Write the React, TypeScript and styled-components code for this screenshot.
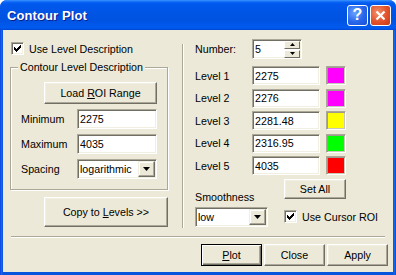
import React from 'react';
import styled, { createGlobalStyle } from 'styled-components';

const GlobalStyle = createGlobalStyle`
  html, body {
    margin: 0;
    padding: 0;
    background: #fff;
  }
  body {
    font-family: "Liberation Sans", Arial, sans-serif;
    font-size: 10.7px;
    color: #000;
  }
`;

const Window = styled.div`
  width: 396px;
  height: 275px;
  display: flex;
  flex-direction: column;
  background: linear-gradient(to right, #0831d9, #166aee 1px, #0855dd 3px, #0855dd calc(100% - 3px), #166aee calc(100% - 1px), #0831d9);
  border-radius: 7px 7px 0 0;
  overflow: hidden;
`;

const TitleBar = styled.div`
  flex: none;
  height: 30px;
  display: flex;
  align-items: center;
  padding: 0 5px 0 7px;
  box-sizing: border-box;
  background: linear-gradient(
    to bottom,
    #3d95ff 0,
    #0a66f5 2px,
    #0058ee 4px,
    #0055e5 12px,
    #0053e1 20px,
    #0058eb 25px,
    #005bf0 28px,
    #0046d0 30px
  );
`;

const Title = styled.div`
  flex: 1;
  color: #fff;
  font-weight: bold;
  font-size: 13px;
  letter-spacing: 0.1px;
  text-shadow: 1px 1px 0 #0a1e8c;
`;

const CaptionButtons = styled.div`
  display: flex;
  gap: 2px;
`;

const CaptionButton = styled.div<{ $kind: 'help' | 'close' }>`
  width: 21px;
  height: 21px;
  box-sizing: border-box;
  border: 1px solid #fff;
  border-radius: 3px;
  display: flex;
  align-items: center;
  justify-content: center;
  color: #fff;
  font-weight: bold;
  font-size: 16px;
  background: ${p =>
    p.$kind === 'close'
      ? 'radial-gradient(circle at 35% 35%, #f0916c, #e2512a 55%, #c8391a)'
      : 'radial-gradient(circle at 35% 35%, #6aa3ff, #2766ea 55%, #1a4fd6)'};
`;

const Client = styled.div`
  flex: 1;
  margin: 0 3px 3px;
  background: #ece9d8;
  display: flex;
  flex-direction: column;
`;

const TopArea = styled.div`
  display: flex;
  align-items: flex-start;
  padding: 9px 0 0 7px;
`;

const LeftColumn = styled.div`
  width: 158px;
  display: flex;
  flex-direction: column;
`;

const VSeparator = styled.div`
  width: 0;
  height: 184px;
  margin: 5px 0 0 14px;
  border-left: 1px solid #aca899;
  border-right: 1px solid #fff;
`;

const RightColumn = styled.div`
  margin-left: 11px;
  flex: 1;
  display: flex;
  flex-direction: column;
`;

const CheckRow = styled.label`
  display: flex;
  align-items: center;
  gap: 5px;
  height: 13px;
  margin: 3px 0 0 1px;
`;

const CheckBox = styled.span`
  width: 13px;
  height: 13px;
  box-sizing: border-box;
  flex: none;
  background: #fff;
  border: 1px solid;
  border-color: #aca899 #fff #fff #aca899;
  box-shadow: inset 1px 1px 0 #716f64, inset -1px -1px 0 #f1efe2;
  display: flex;
  align-items: center;
  justify-content: center;
`;

const GroupBox = styled.fieldset`
  margin: 6px 0 0;
  padding: 8px 10px 10px;
  min-width: 0;
  border: 1px solid #aca899;
  box-shadow: inset 1px 1px 0 #fff, 1px 1px 0 #fff;
  display: flex;
  flex-direction: column;
`;

const GroupLegend = styled.legend`
  padding: 0 2px;
  margin-left: -3px;
  line-height: 13px;
  background: #ece9d8;
`;

const Button = styled.button<{ $w: number; $h?: number; $default?: boolean }>`
  box-sizing: border-box;
  width: ${p => p.$w}px;
  height: ${p => p.$h ?? 22}px;
  flex: none;
  padding: 0;
  font: inherit;
  color: #000;
  background: #ece9d8;
  border: 1px solid;
  border-color: ${p => (p.$default ? '#000' : '#fff #716f64 #716f64 #fff')};
  box-shadow: ${p =>
    p.$default
      ? 'inset 1px 1px 0 #fff, inset -1px -1px 0 #716f64, inset -2px -2px 0 #aca899'
      : 'inset -1px -1px 0 #aca899, inset 1px 1px 0 #f1efe2'};
`;

const LoadButton = styled(Button)`
  margin-left: 23px;
`;

const CopyButton = styled(Button)`
  margin: 7px 0 0 34px;
`;

const FieldRow = styled.div`
  display: flex;
  align-items: center;
  margin-top: 5px;
`;

const FieldLabel = styled.span<{ $w: number }>`
  width: ${p => p.$w}px;
  flex: none;
`;

const Edit = styled.div<{ $w: number; $h?: number }>`
  box-sizing: border-box;
  width: ${p => p.$w}px;
  height: ${p => p.$h ?? 20}px;
  flex: none;
  display: flex;
  align-items: center;
  padding: 0 2px;
  background: #fff;
  border: 1px solid;
  border-color: #aca899 #fff #fff #aca899;
  box-shadow: inset 1px 1px 0 #716f64, inset -1px -1px 0 #f1efe2;
`;

const EditText = styled.span`
  flex: 1;
`;

const DropButton = styled.span`
  width: 17px;
  height: 16px;
  box-sizing: border-box;
  margin-right: -1px;
  flex: none;
  display: flex;
  align-items: center;
  justify-content: center;
  background: #ece9d8;
  border: 1px solid;
  border-color: #f1efe2 #716f64 #716f64 #f1efe2;
  box-shadow: inset -1px -1px 0 #aca899, inset 1px 1px 0 #fff;
`;

const SpinButtons = styled.span`
  display: flex;
  flex-direction: column;
  gap: 1px;
  margin-right: -1px;
`;

const SpinButton = styled.span`
  width: 16px;
  height: 8px;
  box-sizing: border-box;
  display: flex;
  align-items: center;
  justify-content: center;
  background: #ece9d8;
  border: 1px solid;
  border-color: #fff #716f64 #716f64 #fff;
`;

const LevelList = styled.div`
  display: flex;
  flex-direction: column;
  gap: 3.5px;
  margin-top: 7px;
`;

const LevelRow = styled.div`
  display: flex;
  align-items: center;
  height: 19px;
`;

const NumberRow = styled(LevelRow)`
  height: 20px;
`;

const Swatch = styled.span<{ $color: string }>`
  width: 20px;
  height: 19px;
  box-sizing: border-box;
  margin-left: 6px;
  background: ${p => p.$color};
  border: 1px solid;
  border-color: #aca899 #fff #fff #aca899;
  box-shadow: inset 1px 1px 0 #9d9b8e, inset -1px -1px 0 #c9c7ba;
`;

const Controls = styled.div`
  display: flex;
  margin-top: 4px;
`;

const SmoothColumn = styled.div`
  display: flex;
  flex-direction: column;
  padding-top: 12px;
  width: 73px;
`;

const SmoothLabel = styled.span`
  line-height: 13px;
  margin-bottom: 3px;
`;

const SideColumn = styled.div`
  display: flex;
  flex-direction: column;
  margin-left: 16px;
`;

const CursorCheck = styled(CheckRow)`
  margin: 11px 0 0;
`;

const HSeparator = styled.div`
  margin: 8px 8px 0;
  border-top: 1px solid #aca899;
  border-bottom: 1px solid #fff;
`;

const ButtonRow = styled.div`
  display: flex;
  justify-content: flex-end;
  gap: 2px;
  margin-top: 6px;
  padding-right: 5px;
`;

const CheckMark = () => (
  <svg width="7" height="7" viewBox="0 0 7 7">
    <path
      d="M0 2h1v3h-1zM1 3h1v3h-1zM2 4h1v3h-1zM3 3h1v3h-1zM4 2h1v3h-1zM5 1h1v3h-1zM6 0h1v3h-1z"
      fill="#000"
    />
  </svg>
);

const DownArrow = ({ w = 7 }: { w?: number }) => (
  <svg width={w} height={Math.ceil(w / 2)} viewBox={`0 0 ${w} ${Math.ceil(w / 2)}`}>
    <path d={`M0 0h${w}L${w / 2} ${Math.ceil(w / 2)}z`} fill="#000" />
  </svg>
);

const UpArrow = () => (
  <svg width="5" height="3" viewBox="0 0 5 3">
    <path d="M2.5 0L5 3H0z" fill="#000" />
  </svg>
);

const ComboBox: React.FC<{ value: string; width: number }> = ({ value, width }) => (
  <Edit $w={width}>
    <EditText>{value}</EditText>
    <DropButton>
      <DownArrow />
    </DropButton>
  </Edit>
);

const levels = [
  { label: 'Level 1', value: '2275', color: '#ff00ff' },
  { label: 'Level 2', value: '2276', color: '#ff00ff' },
  { label: 'Level 3', value: '2281.48', color: '#ffff00' },
  { label: 'Level 4', value: '2316.95', color: '#00ff00' },
  { label: 'Level 5', value: '4035', color: '#ff0000' },
];

export default function App() {
  return (
    <>
      <GlobalStyle />
      <Window>
        <TitleBar>
          <Title>Contour Plot</Title>
          <CaptionButtons>
            <CaptionButton $kind="help">?</CaptionButton>
            <CaptionButton $kind="close">
              <svg width="11" height="11" viewBox="0 0 11 11">
                <path d="M1.5 1.5L9.5 9.5M9.5 1.5L1.5 9.5" stroke="#fff" strokeWidth="2.2" />
              </svg>
            </CaptionButton>
          </CaptionButtons>
        </TitleBar>
        <Client>
          <TopArea>
            <LeftColumn>
              <CheckRow>
                <CheckBox>
                  <CheckMark />
                </CheckBox>
                Use Level Description
              </CheckRow>
              <GroupBox>
                <GroupLegend>Contour Level Description</GroupLegend>
                <LoadButton $w={113}>
                  Load <u>R</u>OI Range
                </LoadButton>
                <FieldRow>
                  <FieldLabel $w={56}>Minimum</FieldLabel>
                  <Edit $w={80}>2275</Edit>
                </FieldRow>
                <FieldRow>
                  <FieldLabel $w={56}>Maximum</FieldLabel>
                  <Edit $w={80}>4035</Edit>
                </FieldRow>
                <FieldRow>
                  <FieldLabel $w={56}>Spacing</FieldLabel>
                  <ComboBox value="logarithmic" width={80} />
                </FieldRow>
              </GroupBox>
              <CopyButton $w={124} $h={30}>
                Copy to <u>L</u>evels &gt;&gt;
              </CopyButton>
            </LeftColumn>
            <VSeparator />
            <RightColumn>
              <NumberRow>
                <FieldLabel $w={57}>Number:</FieldLabel>
                <Edit $w={50}>
                  <EditText>5</EditText>
                  <SpinButtons>
                    <SpinButton>
                      <UpArrow />
                    </SpinButton>
                    <SpinButton>
                      <DownArrow w={5} />
                    </SpinButton>
                  </SpinButtons>
                </Edit>
              </NumberRow>
              <LevelList>
                {levels.map(l => (
                  <LevelRow key={l.label}>
                    <FieldLabel $w={57}>{l.label}</FieldLabel>
                    <Edit $w={68} $h={19}>
                      {l.value}
                    </Edit>
                    <Swatch $color={l.color} />
                  </LevelRow>
                ))}
              </LevelList>
              <Controls>
                <SmoothColumn>
                  <SmoothLabel>Smoothness</SmoothLabel>
                  <ComboBox value="low" width={73} />
                </SmoothColumn>
                <SideColumn>
                  <Button $w={62} $h={20}>
                    Set All
                  </Button>
                  <CursorCheck>
                    <CheckBox>
                      <CheckMark />
                    </CheckBox>
                    Use Cursor ROI
                  </CursorCheck>
                </SideColumn>
              </Controls>
            </RightColumn>
          </TopArea>
          <HSeparator />
          <ButtonRow>
            <Button $w={61} $default>
              <u>P</u>lot
            </Button>
            <Button $w={61}>Close</Button>
            <Button $w={61}>Apply</Button>
          </ButtonRow>
        </Client>
      </Window>
    </>
  );
}
